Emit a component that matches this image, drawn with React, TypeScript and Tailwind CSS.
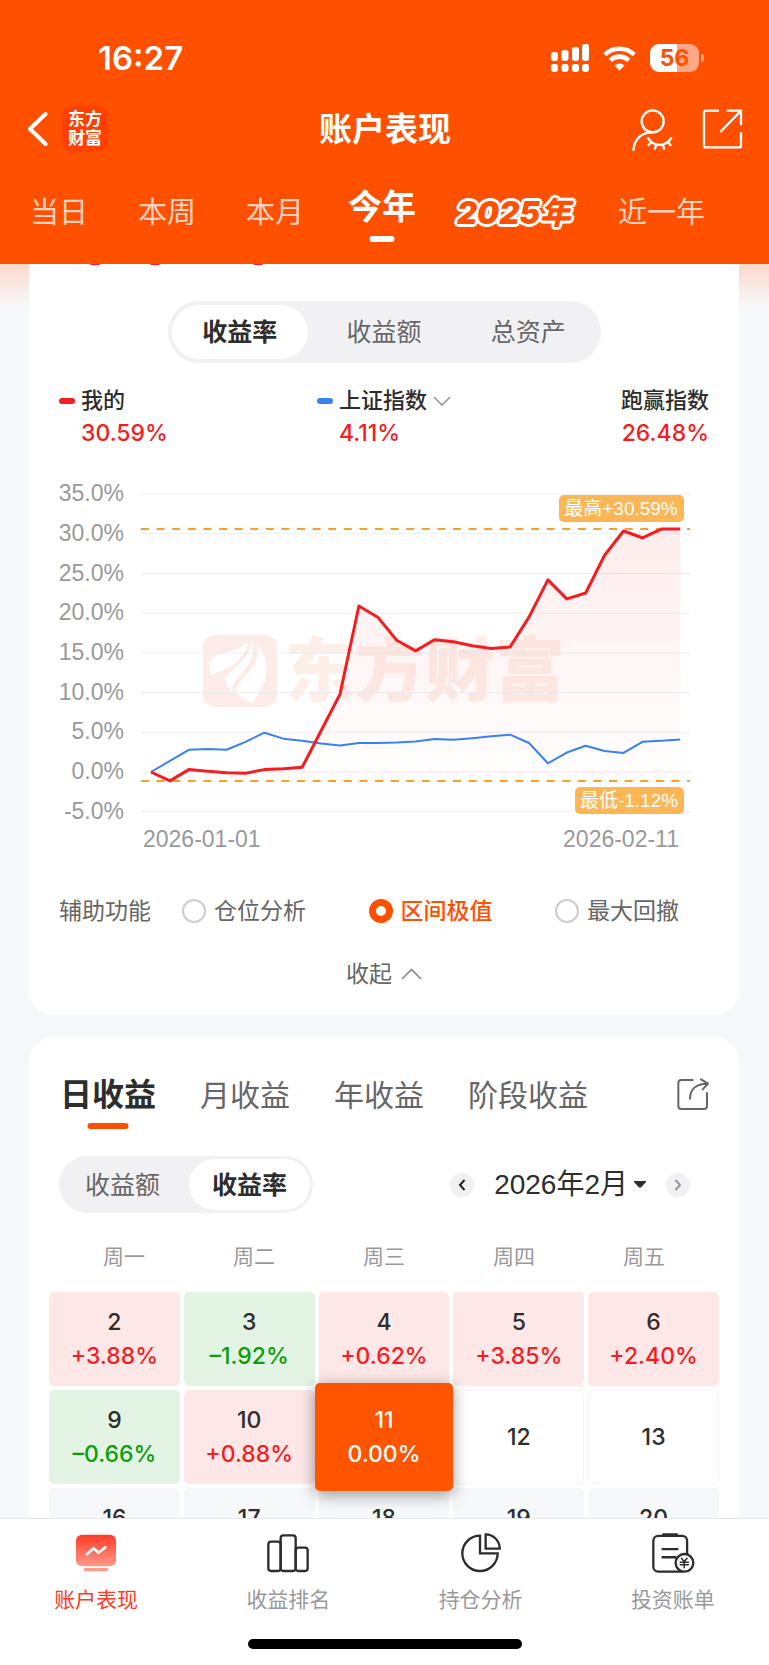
import { useState } from "react";
import clsx from "clsx";

const ranges = ["当日", "本周", "本月", "今年", "2025年", "近一年"];
const metrics = ["收益率", "收益额", "总资产"];
const helpers = ["仓位分析", "区间极值", "最大回撤"];
const periods = ["日收益", "月收益", "年收益", "阶段收益"];
const weekdays = ["周一", "周二", "周三", "周四", "周五"];

const days = [
  { day: 2, value: "+3.88%" },
  { day: 3, value: "–1.92%" },
  { day: 4, value: "+0.62%" },
  { day: 5, value: "+3.85%" },
  { day: 6, value: "+2.40%" },
  { day: 9, value: "–0.66%" },
  { day: 10, value: "+0.88%" },
  { day: 11, value: "0.00%" },
  { day: 12 },
  { day: 13 },
  { day: 16, closed: true },
  { day: 17, closed: true },
  { day: 18, closed: true },
  { day: 19, closed: true },
  { day: 20, closed: true },
];

const mine = [
  0, -1.12, 0.3, 0.1, -0.1, -0.15, 0.3, 0.4, 0.6, 5.2, 9.8, 20.9, 19.5, 16.6,
  15.25, 16.65, 16.4, 15.9, 15.55, 15.75, 19.5, 24.2, 21.8, 22.55, 27.3, 30.35,
  29.5, 30.59, 30.59,
];
const index = [
  0, 1.4, 2.8, 2.9, 2.8, 3.8, 4.95, 4.2, 3.95, 3.6, 3.35, 3.65, 3.65, 3.7, 3.85,
  4.15, 4.05, 4.25, 4.5, 4.7, 3.65, 1.1, 2.45, 3.3, 2.65, 2.4, 3.8, 3.95, 4.1,
];
const ticks = [35, 30, 25, 20, 15, 10, 5, 0, -5];

const toX = (i: number) => 92 + i * 18.9;
const toY = (v: number) => 302 - v * 7.94;
const toPoints = (list: number[]) =>
  list.map((v, i) => `${toX(i)},${toY(v)}`).join(" ");

function StatusBar() {
  return (
    <div className="flex h-8 items-center justify-between pr-[65px] pl-[98px]">
      <span className="font-[Inter] text-[33px] leading-8 font-semibold">
        16:27
      </span>
      <div className="flex items-center gap-[14px]">
        <svg className="h-7 w-[38px]" viewBox="0 0 38 28" fill="currentColor">
          <rect x="0" y="8" width="7" height="9" rx="2.4" />
          <rect x="10.5" y="6" width="7" height="11" rx="2.4" />
          <rect x="21" y="3" width="7" height="14" rx="2.4" />
          <rect x="31" y="0" width="7" height="17" rx="2.4" />
          <rect x="0" y="20" width="7" height="8" rx="2.4" />
          <rect x="10.5" y="20" width="7" height="8" rx="2.4" />
          <rect x="21" y="20" width="7" height="8" rx="2.4" />
          <rect x="31" y="20" width="7" height="8" rx="2.4" />
        </svg>
        <svg className="h-[25px] w-[33px]" viewBox="0 0 33 25" fill="none">
          <path
            d="M1.8 8.6a21.4 21.4 0 0 1 29.4 0M7.3 14.3a13.4 13.4 0 0 1 18.4 0"
            stroke="currentColor"
            strokeWidth="4.6"
          />
          <path
            d="M16.5 24.5l-5-5a7.4 7.4 0 0 1 10 0z"
            fill="currentColor"
          />
        </svg>
        <div className="flex items-center gap-0.5">
          <div className="flex h-7 w-[49px] items-center justify-center rounded-[9px] bg-linear-to-r from-white from-56% to-[#ffa784] to-56% font-[Inter] text-[23px] leading-7 font-bold text-[#ff5000]">
            56
          </div>
          <div className="h-2 w-[3px] rounded-r-full bg-[#ffa784]" />
        </div>
      </div>
    </div>
  );
}

function Header() {
  const [range, setRange] = useState("今年");

  return (
    <header className="bg-[#ff5000] pt-[42px] text-white">
      <StatusBar />
      <div className="mt-8 grid h-[46px] grid-cols-[1fr_auto_1fr] items-center pr-[25px] pl-[26px]">
        <div className="flex items-center gap-[14px]">
          <button type="button" aria-label="返回">
            <svg className="h-9 w-[22px]" viewBox="0 0 22 36" fill="none">
              <path
                d="M19.5 3L4 18l15.500 15"
                stroke="currentColor"
                strokeWidth="4"
                strokeLinecap="round"
                strokeLinejoin="round"
              />
            </svg>
          </button>
          <span className="flex h-[46px] w-[46px] flex-col items-center justify-center rounded-[10px] bg-[#ff4000] text-[17px] leading-[19px] font-bold">
            <span>东方</span>
            <span>财富</span>
          </span>
        </div>
        <h1 className="text-[33px] leading-[46px] font-bold">账户表现</h1>
        <div className="flex items-center justify-end gap-[29px]">
          <button type="button" aria-label="隐藏账户">
            <svg
              className="h-[45px] w-[42px]"
              viewBox="740 318 126 135"
              fill="none"
              stroke="currentColor"
              strokeWidth="7"
            >
              <circle cx="805" cy="361" r="33" />
              <path d="M747 450c2-34 24-58 60-56" />
              <path d="M790 409c16 30 54 30 72 0M801 423l-10 11M816 431l-5 15M836 431l4 15M851 423l9 11" />
            </svg>
          </button>
          <button type="button" aria-label="分享">
            <svg
              className="h-[42px] w-[42px]"
              viewBox="957 324 126 126"
              fill="none"
              stroke="currentColor"
              strokeWidth="7"
            >
              <path d="M1008 332h-40q-5 0-5 5v100q0 5 5 5h101q5 0 5-5v-41M1031 332h43v43M1074 332l-62 64" />
            </svg>
          </button>
        </div>
      </div>
      <nav className="mt-6 flex h-[88px] items-start gap-[50px] px-[30px]">
        {ranges.map((item) => (
          <button
            key={item}
            type="button"
            onClick={() => setRange(item)}
            className={clsx(
              "relative h-[66px] shrink-0 whitespace-nowrap",
              item === "2025年"
                ? "-mx-1.5 px-[3px] pt-2 text-[31px] font-black text-[#ff5000] italic [text-shadow:3px_0_#fff,-3px_0_#fff,0_3px_#fff,0_-3px_#fff,2px_2px_#fff,-2px_2px_#fff,2px_-2px_#fff,-2px_-2px_#fff]"
                : range === item
                  ? "-mx-1.5 pb-1.5 text-[34px] font-bold"
                  : "pt-2 text-[29px] text-[#ffd3bf]",
            )}
          >
            {item}
            {range === item && (
              <span className="absolute bottom-0 left-1/2 h-1.5 w-[25px] -translate-x-1/2 rounded-full bg-white" />
            )}
          </button>
        ))}
      </nav>
    </header>
  );
}

function Watermark() {
  return (
    <g>
      <rect x="144" y="165" width="74" height="72" rx="12" fill="#fdebe7" />
      <g transform="translate(-59 70) scale(0.3333)" fill="#fff">
        <path d="M747 300c-12 36-98 28-119 66q-1 20 3 38c40-14 98-26 116-104z" />
        <path d="M752 302c6 50-50 76-76 114q4 24 17 42c6-50 90-92 59-156z" />
        <path d="M768 306c24 74-44 92-63 150q24 22 52 36c10-30 44-50 42-106q-2-50-31-80z" />
      </g>
      <text
        x="226"
        y="226"
        className="fill-[#fdeee7] text-[70px] font-black"
      >
        东方财富
      </text>
    </g>
  );
}

function Chart() {
  return (
    <svg
      className="mt-5 block w-full font-['Liberation_Sans','Noto_Sans_CJK_SC',sans-serif]"
      viewBox="0 0 650 390"
      role="img"
      aria-label="今年收益率走势"
    >
      <defs>
        <linearGradient id="area" x1="0" y1="0" x2="0" y2="1">
          <stop offset="0" stopColor="#f52222" stopOpacity="0.08" />
          <stop offset="1" stopColor="#f52222" stopOpacity="0" />
        </linearGradient>
      </defs>
      <Watermark />
      {ticks.map((t) => (
        <g key={t}>
          <line
            x1="82"
            x2="631"
            y1={toY(t)}
            y2={toY(t)}
            stroke="#e9edf3"
            strokeWidth="1"
          />
          <text
            x="65"
            y={toY(t) + 7}
            textAnchor="end"
            className="fill-[#999] text-[23px]"
          >
            {t.toFixed(1)}%
          </text>
        </g>
      ))}
      <polygon
        points={`${toX(0)},336 ${toPoints(mine)} ${toX(28)},336`}
        fill="url(#area)"
      />
      <g stroke="#f9a02c" strokeWidth="2" strokeDasharray="8 7.6">
        <line x1="82" x2="631" y1="59" y2="59" />
        <line x1="82" x2="631" y1="311" y2="311" />
      </g>
      <polyline
        points={toPoints(index)}
        fill="none"
        stroke="#3a80f2"
        strokeWidth="2"
        strokeLinejoin="round"
      />
      <polyline
        points={toPoints(mine)}
        fill="none"
        stroke="#f51d1f"
        strokeWidth="3"
        strokeLinejoin="round"
      />
      <rect x="500" y="25" width="125" height="27" rx="5" fill="#fcb655" />
      <text
        x="562"
        y="45"
        textAnchor="middle"
        className="fill-white text-[19px]"
      >
        最高+30.59%
      </text>
      <rect x="516" y="317" width="109" height="27" rx="5" fill="#fcb655" />
      <text
        x="570"
        y="337"
        textAnchor="middle"
        className="fill-white text-[19px]"
      >
        最低-1.12%
      </text>
      <text x="84" y="377" className="fill-[#999] text-[23px]">
        2026-01-01
      </text>
      <text
        x="620"
        y="377"
        textAnchor="end"
        className="fill-[#999] text-[23px]"
      >
        2026-02-11
      </text>
    </svg>
  );
}

function Performance() {
  const [metric, setMetric] = useState("收益率");
  const [helper, setHelper] = useState("区间极值");

  return (
    <section className="rounded-b-3xl bg-white px-[30px] pb-6">
      {/* bottom edge of the total that is scrolled under the header */}
      <svg className="block h-[37px] w-60" viewBox="0 0 240 37" fill="#f5222d">
        <ellipse cx="36" cy="0" rx="5" ry="1.2" />
        <ellipse cx="96" cy="0" rx="5" ry="1.2" />
        <ellipse cx="199" cy="0" rx="5" ry="1.2" />
      </svg>
      <div className="mx-auto grid w-[433px] grid-cols-3 rounded-full bg-[#f1f1f4] text-[25px]">
        {metrics.map((item) => (
          <button
            key={item}
            type="button"
            onClick={() => setMetric(item)}
            className={clsx(
              "m-1 h-[54px] rounded-full pt-0.5",
              metric === item
                ? "bg-white font-bold text-[#2d2d2d]"
                : "text-[#666]",
            )}
          >
            {item}
          </button>
        ))}
      </div>

      <div className="mt-[21px] grid grid-cols-[258px_1fr_auto] text-[22px] leading-[33px] font-medium text-[#2d2d2d]">
        <div>
          <p className="flex items-center gap-1.5">
            <span className="h-1.5 w-4 rounded-full bg-[#f51d1f]" />
            我的
          </p>
          <p className="pl-[22px] font-[Inter] text-[23px] text-[#f51d1f]">
            30.59%
          </p>
        </div>
        <div>
          <button type="button" className="flex items-center gap-1.5">
            <span className="h-1.5 w-4 rounded-full bg-[#3a80f2]" />
            <span className="flex items-center gap-1.5">
              上证指数
              <svg className="h-3 w-[18px]" viewBox="0 0 18 12" fill="none">
                <path d="M1 2l8 8 8-8" stroke="#999" strokeWidth="1.6" />
              </svg>
            </span>
          </button>
          <p className="pl-[22px] font-[Inter] text-[23px] text-[#f51d1f]">
            4.11%
          </p>
        </div>
        <div className="text-right">
          <p>跑赢指数</p>
          <p className="font-[Inter] text-[23px] text-[#f51d1f]">26.48%</p>
        </div>
      </div>

      <Chart />

      <fieldset className="mt-[34px] flex h-[34px] items-center text-[23px] leading-[34px] text-[#666]">
        <legend className="float-left mr-[31px]">辅助功能</legend>
        <div className="flex flex-1 justify-between pr-[30px]">
          {helpers.map((item) => (
            <label
              key={item}
              className={clsx(
                "flex items-center gap-2",
                helper === item && "font-medium text-[#ff5000]",
              )}
            >
              <input
                type="radio"
                name="helper"
                checked={helper === item}
                onChange={() => setHelper(item)}
                className="h-6 w-6 appearance-none rounded-full border-2 border-[#ccc] bg-white checked:border-[7px] checked:border-[#ff5000]"
              />
              {item}
            </label>
          ))}
        </div>
      </fieldset>
      <button
        type="button"
        className="mx-auto mt-[29px] flex items-center gap-[9px] text-[23px] leading-[34px] text-[#666]"
      >
        收起
        <svg className="h-3 w-[21px]" viewBox="0 0 21 12" fill="none">
          <path d="M1 11l9.500-9.500L20 11" stroke="#888" strokeWidth="1.6" />
        </svg>
      </button>
    </section>
  );
}

function MonthArrow({ label, path }: { label: string; path: string }) {
  return (
    <button
      type="button"
      aria-label={label}
      className={clsx(
        "flex h-6 w-6 items-center justify-center rounded-full bg-[#f1f1f4]",
        label === "下个月" ? "text-[#999]" : "text-[#222]",
      )}
    >
      <svg className="h-3 w-2" viewBox="0 0 8 12" fill="none">
        <path d={path} stroke="currentColor" strokeWidth="2" />
      </svg>
    </button>
  );
}

function Calendar() {
  const [period, setPeriod] = useState("日收益");
  const [unit, setUnit] = useState("收益率");
  const [selected, setSelected] = useState(11);

  return (
    <section className="mt-[23px] rounded-t-3xl bg-white px-[30px] pt-[30px] pb-6">
      <div className="flex h-[61px] items-start gap-11 pl-px">
        {periods.map((item) => (
          <button
            key={item}
            type="button"
            onClick={() => setPeriod(item)}
            className={clsx(
              "relative h-[61px] whitespace-nowrap pb-[7px]",
              period === item
                ? "text-[32px] font-bold text-[#2d2d2d]"
                : "text-[30px] text-[#666]",
            )}
          >
            {item}
            {period === item && (
              <span className="absolute bottom-0 left-1/2 h-1.5 w-[41px] -translate-x-1/2 rounded-full bg-[#ff5000]" />
            )}
          </button>
        ))}
        <button type="button" aria-label="分享" className="mt-2.5 ml-auto">
          <svg
            className="h-[33px] w-[33px]"
            viewBox="878 656 99 99"
            fill="none"
            stroke="#666"
            strokeWidth="6"
            strokeLinecap="round"
          >
            <path d="M928 662h-34q-9 0-9 9v69q0 9 9 9h68q9 0 9-9v-39M920 718c0-28 18-45 53-45M953 660l21 13-16 17" />
          </svg>
        </button>
      </div>

      <div className="mt-[27px] flex items-center justify-between pr-[19px]">
        <div className="grid w-[254px] grid-cols-2 rounded-full bg-[#f1f1f4] text-[25px]">
          {["收益额", "收益率"].map((item) => (
            <button
              key={item}
              type="button"
              onClick={() => setUnit(item)}
              className={clsx(
                "m-[3px] h-[51px] rounded-full pt-0.5",
                unit === item
                  ? "bg-white font-bold text-[#2d2d2d]"
                  : "text-[#666]",
              )}
            >
              {item}
            </button>
          ))}
        </div>
        <div className="flex items-center gap-5">
          <MonthArrow label="上个月" path="M6.500 1L2 6l4.500 5" />
          <button
            type="button"
            className="flex items-center gap-1.5 font-['Liberation_Sans','Noto_Sans_CJK_SC',sans-serif] text-[28px] leading-[40px] text-[#2d2d2d]"
          >
            2026年2月
            <svg className="h-[7px] w-3" viewBox="0 0 12 7">
              <path d="M0 0h12v1L7 6.500H5L0 1z" fill="currentColor" />
            </svg>
          </button>
          <MonthArrow label="下个月" path="M1.500 1L6 6l-4.500 5" />
        </div>
      </div>

      <div className="mt-[29px] grid grid-cols-5 text-center text-[21px] leading-[30px] text-[#999]">
        {weekdays.map((d) => (
          <span key={d}>{d}</span>
        ))}
      </div>

      <div className="-mx-2.5 mt-5 grid auto-rows-[94px] grid-cols-5 gap-1 font-[Inter] text-[23px] leading-[34px] font-medium text-[#2d2d2d]">
        {days.map(({ day, value, closed }) => (
          <button
            key={day}
            type="button"
            onClick={() => setSelected(day)}
            className={clsx(
              "flex flex-col items-center rounded-[5px]",
              !value && !closed
                ? "justify-center"
                : selected === day
                  ? "pt-5"
                  : "pt-[13px]",
              selected === day
                ? "z-10 -mx-1 -my-[7px] bg-[#ff5500] text-white shadow-[0_4px_16px_rgba(0,0,0,0.4)]"
                : closed
                  ? "bg-[#f6f8fa]"
                  : !value
                    ? "border border-[#f3f3f5] bg-white"
                    : value.startsWith("+")
                      ? "bg-[#fde7e7]"
                      : "bg-[#e4f4e4]",
            )}
          >
            <span>{day}</span>
            {value && (
              <span
                className={clsx(
                  selected !== day &&
                    (value.startsWith("+")
                      ? "text-[#f51d1f]"
                      : "text-[#0a9f0a]"),
                )}
              >
                {value}
              </span>
            )}
          </button>
        ))}
      </div>
    </section>
  );
}

function TabBar() {
  return (
    <nav className="relative z-20 shrink-0 border-t border-[#e8e8ea] bg-white pt-3.5 pb-4">
      <div className="grid grid-cols-4 text-[21px] leading-7 text-[#999]">
        <a
          href="#performance"
          className="flex flex-col items-center gap-[13px] text-[#ff3b24]"
        >
          <svg className="h-10 w-11" viewBox="222 460 132 120" fill="none">
            <defs>
              <linearGradient id="screen" x1="0" y1="0" x2="0" y2="1">
                <stop offset="0" stopColor="#ff3b24" />
                <stop offset="1" stopColor="#ff9a8c" />
              </linearGradient>
            </defs>
            <rect
              x="228"
              y="465"
              width="120"
              height="95"
              rx="18"
              fill="url(#screen)"
            />
            <path
              d="M261 524l20-18 15 13 20-16"
              stroke="#fff"
              strokeWidth="8"
              strokeLinecap="round"
              strokeLinejoin="round"
            />
            <rect
              x="252"
              y="565"
              width="72"
              height="10"
              rx="4"
              fill="#ff9a8c"
            />
          </svg>
          账户表现
        </a>
        <a href="#ranking" className="flex flex-col items-center gap-[13px]">
          <svg
            className="h-10 w-11"
            viewBox="798 458 132 120"
            fill="none"
            stroke="#2d2d2d"
            strokeWidth="7"
          >
            <rect x="805" y="484" width="37" height="88" rx="8" />
            <rect x="842" y="465" width="45" height="107" rx="8" />
            <rect x="887" y="502" width="36" height="70" rx="8" />
          </svg>
          收益排名
        </a>
        <a href="#holdings" className="flex flex-col items-center gap-[13px]">
          <svg
            className="h-10 w-11"
            viewBox="222 459 132 120"
            fill="none"
            stroke="#2d2d2d"
            strokeWidth="7"
          >
            <path d="M285 467a53 53 0 1 0 53 53h-53zM302 463v43h42a42 43 0 0 0-42-43z" />
          </svg>
          持仓分析
        </a>
        <a href="#bills" className="flex flex-col items-center gap-[13px]">
          <svg
            className="h-10 w-11"
            viewBox="797 459 132 122"
            fill="none"
            stroke="#2d2d2d"
            strokeWidth="7"
            strokeLinecap="round"
          >
            <rect x="803" y="468" width="103" height="109" rx="15" />
            <path d="M834 464h40" strokeWidth="9" />
            <path d="M831 508h46M831 533h40" />
            <circle cx="898" cy="550" r="27" fill="#fff" />
            <path
              d="M889 536l8 10 9-10M897 546v19M885 548h25M885 556h25"
              strokeWidth="4.500"
            />
          </svg>
          投资账单
        </a>
      </div>
      <div className="mx-auto mt-[25px] h-2.5 w-[274px] rounded-full bg-black" />
    </nav>
  );
}

export default function App() {
  return (
    <div className="flex h-screen flex-col overflow-hidden bg-[#f6f8fa] font-[Inter,'Noto_Sans_CJK_SC',sans-serif]">
      <Header />
      <main className="min-h-0 flex-1 overflow-y-auto bg-linear-to-b from-[#fbd8cb] to-[#f6f8fa] to-[42px] pr-[30px] pl-[29px] [scrollbar-width:none]">
        <Performance />
        <Calendar />
      </main>
      <TabBar />
    </div>
  );
}
